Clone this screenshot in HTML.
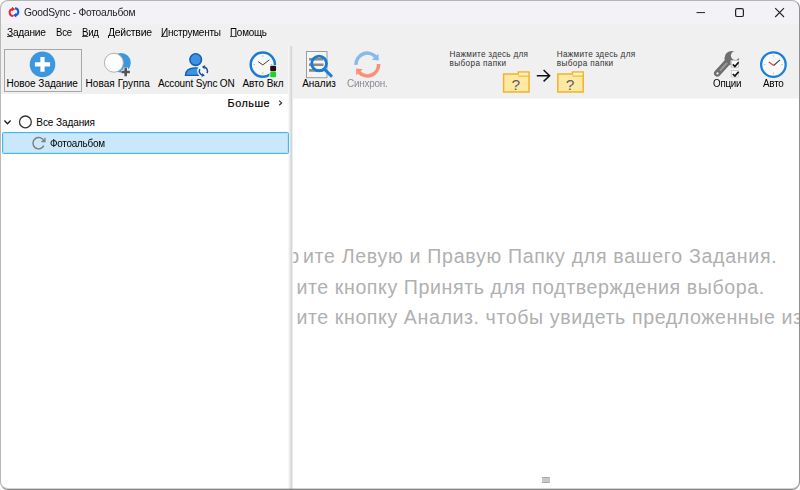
<!DOCTYPE html>
<html lang="ru"><head><meta charset="utf-8"><title>GoodSync - Фотоальбом</title>
<style>
html,body{margin:0;padding:0;}
body{width:800px;height:490px;overflow:hidden;background:#fff;font-family:"Liberation Sans",sans-serif;position:relative;}
#win{position:absolute;left:0;top:0;width:800px;height:490px;border-radius:8px;background:#fff;overflow:hidden;}
#win>*{position:absolute;}
#frame{position:absolute;left:0;top:0;width:798px;height:488px;border-radius:8px;border:1px solid #a6a6a6;border-top-color:#b4b4b4;border-left-color:#b8b8b8;border-right-color:#909090;border-bottom:1px solid #8a8a8a;box-shadow:inset 0 -1px 0 rgba(120,120,120,0.35);pointer-events:none;}
.t{position:absolute;white-space:nowrap;line-height:1;color:#000;}
#title{left:0;top:0;width:800px;height:24px;background:#f3f3f7;}
#menub{left:0;top:24px;width:800px;height:22px;background:#f0f0f0;}
#tbL{left:0;top:46px;width:290px;height:48px;background:#f0f0f0;}
#tbR{left:290px;top:46px;width:510px;height:53px;background:linear-gradient(180deg,#f0f0f0 0,#f0f0f0 51.5px,#fafafa 53px);}
#split{left:288px;top:46px;width:5px;height:444px;background:linear-gradient(90deg,#f7f7f7 0,#f7f7f7 1px,#ececec 1px,#ececec 2px,#e0e0e0 2px,#e0e0e0 3px,#d5d5d5 3px,#d5d5d5 4px,#ededed 4px,#ededed 5px);}
#sel{left:1.5px;top:132.3px;width:285.8px;height:20px;background:#cbe8fa;border:1px solid #3fbaf0;box-shadow:inset 0 0 0 1px #b4e1f9;border-radius:1.5px;}
#btn{left:4px;top:48.5px;width:75.5px;height:41px;border:1px solid #a6a6a6;background:#f0f0f0;}
#grip{left:542px;top:477px;width:8px;height:4.4px;background:#c8c8c8;border-top:1px solid #a8a8a8;border-bottom:1px solid #a8a8a8;border-radius:1px;}
u{text-decoration:underline;text-underline-offset:0.4px;text-decoration-color:#444;text-decoration-thickness:1px;}
svg{position:absolute;overflow:visible;}
</style></head><body>
<div id="win">
<div id="title"></div><div id="menub"></div><div id="tbL"></div><div id="tbR"></div>
<div id="split"></div><div id="sel"></div><div id="btn"></div><div id="grip"></div>
<svg width="800" height="490" viewBox="0 0 800 490" style="left:0;top:0">
<!-- title logo -->
<g transform="translate(14.1 12.15) scale(0.83) translate(-14.2 -12.2)">
<g fill="none" stroke-width="2.4">
<path d="M13.2 16.9 A4.3 4.3 0 0 1 12.2 8.4" stroke="#f4212e"/>
<path d="M15.2 7.5 A4.3 4.3 0 0 1 16.2 15.9" stroke="#0a5cf5"/>
</g>
<path d="M11.6 5.8 L15.6 8.6 L11.6 11.2 Z" fill="#f4212e"/>
<path d="M16.8 13.2 L12.8 16 L16.8 18.6 Z" fill="#0a5cf5"/>
</g>
<!-- window controls -->
<path d="M696.5 12.6 H705" stroke="#222" stroke-width="1"/>
<rect x="735.6" y="8.7" width="7.8" height="7.8" rx="1.6" fill="none" stroke="#222" stroke-width="1.2"/>
<path d="M775.2 8.2 L784 17 M784 8.2 L775.2 17" stroke="#222" stroke-width="1.1"/>
<!-- new job -->
<circle cx="42.5" cy="64.4" r="12.8" fill="#3b98de"/>
<path d="M42.5 57 V71.8 M34.9 64.4 H50.1" stroke="#fff" stroke-width="4.2"/>
<!-- new group -->
<circle cx="121" cy="62.7" r="9.8" fill="#3b98de"/>
<circle cx="113.9" cy="62.7" r="9.5" fill="#fdfdfd" stroke="#a8a8a8" stroke-width="0.9"/>
<path d="M125.7 67.6 V76.4 M121.3 72 H130.1" stroke="#f6f6f6" stroke-width="4.6"/>
<path d="M125.7 67.8 V76.2 M121.5 72 H129.9" stroke="#555" stroke-width="2.6"/>
<!-- account sync -->
<circle cx="195.7" cy="59.6" r="5.8" fill="#3d93e2" stroke="#125db6" stroke-width="1.6"/>
<path d="M185.4 75.4 C185.4 69.6 189.5 67.8 195.7 67.8 C201.9 67.8 206 69.6 206 75.4 Z" fill="#3d93e2" stroke="#125db6" stroke-width="1.3"/>
<circle cx="203.4" cy="71.1" r="6.3" fill="#f4f4f4"/>
<g fill="none" stroke="#164f9e" stroke-width="1.5">
<path d="M206.95 73.15 A4.1 4.1 0 0 0 204.80 67.25"/>
<path d="M199.85 69.05 A4.1 4.1 0 0 0 202.00 74.95"/>
</g>
<path d="M201.90 66.67 L205.22 65.12 L204.49 69.26 Z" fill="#164f9e"/>
<path d="M204.90 75.53 L201.58 77.08 L202.31 72.94 Z" fill="#164f9e"/>
<!-- auto on clock -->
<circle cx="262.8" cy="64.6" r="12.1" fill="#f7f7f7" stroke="#187cd6" stroke-width="2.5"/>
<path d="M258.2 61.7 L262.8 64.9 L269.4 59.8" fill="none" stroke="#444" stroke-width="1"/>
<g stroke="#b5b5b5" stroke-width="0.9"><path d="M262.8 55.2 v1.6 M262.8 72.4 v1.6 M253.4 64.6 h1.6 M270.6 64.6 h1.6"/></g>
<rect x="269.4" y="65" width="7.6" height="13" rx="1.8" fill="#f4f4f4"/>
<rect x="270.2" y="65.8" width="5.9" height="5.5" rx="1.2" fill="#24100e"/>
<rect x="270.2" y="71.8" width="5.9" height="5.5" rx="1.2" fill="#1ed21e"/>
<!-- analyze -->
<rect x="306.5" y="51.5" width="20.5" height="26.2" fill="#f5f5f5" stroke="#9c9c9c" stroke-width="1"/>
<path d="M309 59.2 H323.5 M309 64.8 H323.5 M309 70.4 H323.5" stroke="#8a8a8a" stroke-width="2.6"/>
<circle cx="319.1" cy="63.5" r="7.4" fill="none" stroke="#187cd6" stroke-width="2.8"/>
<path d="M324.6 69.4 L331.2 75.8" stroke="#1b80d8" stroke-width="3" stroke-linecap="round"/>
<!-- sync (disabled) -->
<g fill="none" stroke-width="3.6">
<path d="M356 64.9 A11.3 11.3 0 0 1 375.6 56.8" stroke="#88b9eb"/>
<path d="M378.6 64 A11.3 11.3 0 0 1 359 72.2" stroke="#fa9079"/>
</g>
<path d="M378.4 53.8 L378.8 60.5 L371.8 59.7 Z" fill="#88b9eb"/>
<path d="M356.2 75.2 L356.2 68.6 L362.8 69.2 Z" fill="#fa9079"/>
<!-- folders -->
<g id="fold1">
<path d="M503.6 74 H518.4 V72 H529 V92 H503.6 Z" fill="#fde9a2" stroke="#f0b428" stroke-width="1.5"/>
<path d="M518.4 76 H529" stroke="#f0b428" stroke-width="1.3" fill="none"/>
<rect x="519.2" y="72.8" width="9" height="2.5" fill="#fef3c8"/>
</g>
<g id="fold2" transform="translate(54.2 0)">
<path d="M503.6 74 H518.4 V72 H529 V92 H503.6 Z" fill="#fde9a2" stroke="#f0b428" stroke-width="1.5"/>
<path d="M518.4 76 H529" stroke="#f0b428" stroke-width="1.3" fill="none"/>
<rect x="519.2" y="72.8" width="9" height="2.5" fill="#fef3c8"/>
</g>
<path d="M536.8 75.7 H549.4 M543.6 70 L549.6 75.7 L543.6 81.4" fill="none" stroke="#111" stroke-width="1.5"/>
<!-- options -->
<defs><mask id="wm" maskUnits="userSpaceOnUse" x="700" y="40" width="60" height="50"><rect x="700" y="40" width="60" height="50" fill="#fff"/><circle cx="735.2" cy="55.6" r="4.3" fill="#000"/><path d="M734.2 55.6 L738 44 L748 50 L739.2 57.5 Z" fill="#000"/></mask></defs>
<g mask="url(#wm)">
<path d="M717.4 73.2 L729.4 60" stroke="#6e6e6e" stroke-width="6.8" stroke-linecap="round"/>
<circle cx="731.8" cy="58.2" r="7.3" fill="#6e6e6e"/>
</g>
<path d="M720.4 70.2 L726.6 63.4" stroke="#9c9c9c" stroke-width="1.9" stroke-linecap="round"/>
<circle cx="717.5" cy="73.4" r="1.15" fill="#f0f0f0"/>
<rect x="730.7" y="60" width="8.4" height="7.6" fill="#f0f0f0"/>
<rect x="730.7" y="69.8" width="8.4" height="7.8" fill="#f0f0f0"/>
<rect x="731.3" y="60.6" width="7.2" height="6.6" fill="#fbfbfb" stroke="#bdbdbd" stroke-width="0.9"/>
<rect x="731.3" y="70.4" width="7.2" height="6.6" fill="#fbfbfb" stroke="#c6c6c6" stroke-width="0.8"/>
<path d="M732.8 64.4 L734.9 66.5 L738.6 62.2 M732.8 74 L734.9 76.1 L738.6 71.8" fill="none" stroke="#111" stroke-width="1.7"/>
<!-- auto clock -->
<circle cx="773.4" cy="64.6" r="12.3" fill="#fbfbfb" stroke="#1b80d8" stroke-width="2.3"/>
<g stroke="#c0c0c0" stroke-width="0.9"><path d="M773.4 55 v1.8 M773.4 72.4 v1.8 M763.8 64.6 h1.8 M781.2 64.6 h1.8"/></g>
<path d="M773.7 65.5 L768.8 62" stroke="#f03a24" stroke-width="1.2"/>
<path d="M773.7 65.5 L780 59.8" stroke="#444" stroke-width="1.1"/>
<!-- tree icons -->
<path d="M4.4 120.4 L7.5 123.7 L10.6 120.4" fill="none" stroke="#222" stroke-width="1.4"/>
<circle cx="25.4" cy="121.9" r="5.9" fill="#fff" stroke="#333" stroke-width="1.3"/>
<path d="M43.9 141 A5.7 5.7 0 1 0 43.8 145.6" fill="none" stroke="#7c7c7c" stroke-width="1.4"/>
<path d="M44.9 137.8 V141.5 H41.4" fill="none" stroke="#7c7c7c" stroke-width="1.4"/>
<path d="M279.2 100.6 L281.6 102.9 L279.2 105.2" fill="none" stroke="#333" stroke-width="1.2"/>
</svg>

<span class="t" style="left:24.4px;top:7.2px;font-size:10.6px;letter-spacing:-0.25px;color:#222;transform:scaleX(0.970);transform-origin:0 0;">GoodSync - Фотоальбом</span>
<span class="t" style="left:7px;top:26.8px;font-size:10.6px;letter-spacing:-0.25px;color:#000;transform:scaleX(0.962);transform-origin:0 0;"><u>З</u>адание</span>
<span class="t" style="left:56px;top:26.8px;font-size:10.6px;letter-spacing:-0.25px;color:#000;transform:scaleX(0.901);transform-origin:0 0;">Все</span>
<span class="t" style="left:82px;top:26.8px;font-size:10.6px;letter-spacing:-0.25px;color:#000;transform:scaleX(0.910);transform-origin:0 0;"><u>В</u>ид</span>
<span class="t" style="left:108px;top:26.8px;font-size:10.6px;letter-spacing:-0.25px;color:#000;transform:scaleX(0.981);transform-origin:0 0;"><u>Д</u>ействие</span>
<span class="t" style="left:161px;top:26.8px;font-size:10.6px;letter-spacing:-0.25px;color:#000;transform:scaleX(0.944);transform-origin:0 0;"><u>И</u>нструменты</span>
<span class="t" style="left:230px;top:26.8px;font-size:10.6px;letter-spacing:-0.25px;color:#000;transform:scaleX(0.932);transform-origin:0 0;"><u>П</u>омощь</span>
<span class="t" style="left:6.6px;top:78.5px;font-size:10px;letter-spacing:-0.02px;color:#000;">Новое Задание</span>
<span class="t" style="left:85.5px;top:78.5px;font-size:10px;letter-spacing:0.07px;color:#000;">Новая Группа</span>
<span class="t" style="left:158px;top:78.5px;font-size:10px;letter-spacing:-0.16px;color:#000;">Account Sync ON</span>
<span class="t" style="left:242.4px;top:78.5px;font-size:10px;letter-spacing:-0.05px;color:#000;">Авто Вкл</span>
<span class="t" style="left:302.2px;top:78.5px;font-size:10px;letter-spacing:-0.03px;color:#000;">Анализ</span>
<span class="t" style="left:347px;top:78.5px;font-size:10px;letter-spacing:-0.25px;color:#8c8c94;transform:scaleX(0.997);transform-origin:0 0;">Синхрон.</span>
<span class="t" style="left:712.5px;top:78.5px;font-size:10px;letter-spacing:-0.25px;color:#000;transform:scaleX(0.980);transform-origin:0 0;">Опции</span>
<span class="t" style="left:763.1px;top:78.5px;font-size:10px;letter-spacing:-0.25px;color:#000;transform:scaleX(0.993);transform-origin:0 0;">Авто</span>
<span class="t" style="left:227.6px;top:97.9px;font-size:10.8px;letter-spacing:0.51px;color:#000;-webkit-text-stroke:0.18px #000;">Больше</span>
<span class="t" style="left:36.3px;top:117.7px;font-size:10px;letter-spacing:-0.08px;color:#000;">Все Задания</span>
<span class="t" style="left:50px;top:138.7px;font-size:10px;letter-spacing:-0.25px;color:#000;transform:scaleX(0.991);transform-origin:0 0;">Фотоальбом</span>
<span class="t" style="left:449.6px;top:51.2px;font-size:8.2px;letter-spacing:0.26px;color:#333;">Нажмите здесь для</span>
<span class="t" style="left:449.6px;top:60.2px;font-size:8.2px;letter-spacing:0.36px;color:#333;">выбора папки</span>
<span class="t" style="left:556.8px;top:51.2px;font-size:8.2px;letter-spacing:0.26px;color:#333;">Нажмите здесь для</span>
<span class="t" style="left:556.8px;top:60.2px;font-size:8.2px;letter-spacing:0.36px;color:#333;">выбора папки</span>
<span class="t" style="left:511.6px;top:76.7px;font-size:15.5px;letter-spacing:0.00px;color:#5c5c74;">?</span>
<span class="t" style="left:565.8px;top:76.7px;font-size:15.5px;letter-spacing:0.00px;color:#5c5c74;">?</span>
<div id="pane" style="left:293px;top:99px;width:507px;height:391px;overflow:hidden;"><span class="t" style="left:-56.5px;top:147.6px;font-size:19.6px;letter-spacing:0.69px;color:#b0b0b0;"><span style="margin-right:3px">Выбер</span>ите Левую и Правую Папку для вашего Задания.</span>
<span class="t" style="left:-53.6px;top:178.6px;font-size:19.6px;letter-spacing:0.59px;color:#b0b0b0;"><span style="margin-right:3px">Нажм</span>ите кнопку Принять для подтверждения выбора.</span>
<span class="t" style="left:-53.6px;top:209.4px;font-size:19.6px;letter-spacing:0.59px;color:#b0b0b0;"><span style="margin-right:3px">Нажм</span>ите кнопку Анализ. чтобы увидеть предложенные изменения.</span></div>
</div>
<div id="frame"></div>
</body></html>
